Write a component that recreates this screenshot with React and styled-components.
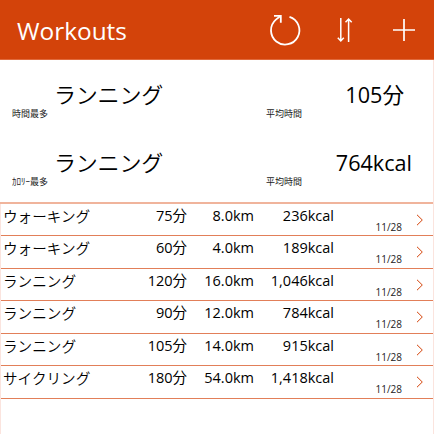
import React from "react";
import styled, { createGlobalStyle } from "styled-components";

const GlobalStyle = createGlobalStyle`
  * { box-sizing: border-box; }
  body {
    margin: 0;
    background: #fff;
    color: #000;
    font-family: "Open Sans", "Noto Sans CJK JP", sans-serif;
    overflow: hidden;
  }
`;

const Screen = styled.main`
  width: 434px;
  height: 434px;
  display: flex;
  flex-direction: column;
  border: 0 solid #fbe4de;
  border-right-width: 1px;
  background: #fff;
`;

const Header = styled.header`
  height: 60px;
  flex: none;
  width: 434px;
  display: flex;
  align-items: center;
  padding-left: 17px;
  background: #d3430a;
  border-bottom: 1px solid #e06a3c;
  color: #fff;
`;

const Title = styled.h1`
  flex: 1;
  margin: 0;
  padding-top: 2px;
  font-size: 24.4px;
  line-height: 34px;
  font-weight: 400;
`;

const IconButton = styled.button`
  width: 60px;
  height: 59px;
  padding: 0;
  border: 0;
  background: none;
  color: #fff;
  svg { display: block; }
`;

const Summary = styled.section`
  height: 144px;
  flex: none;
  display: grid;
  grid-template-rows: 68px 76px;
  border-bottom: 2px solid #f0b49c;
`;

const Stat = styled.div`
  display: grid;
  grid-template-columns: 54px 212px 1fr;
  grid-template-rows: 46px 16px;
  padding-top: 11px;
`;

const StatName = styled.div`
  grid-column: 2 / 3;
  font-size: 22px;
  line-height: 46px;
  letter-spacing: -0.2px;
  font-weight: 350;
`;

const StatValue = styled.div`
  grid-column: 3 / 4;
  padding-top: 1px;
  padding-right: ${(p) => p.$inset}px;
  text-align: right;
  font-size: 21.6px;
  line-height: 46px;
  font-weight: 370;
`;

const Caption = styled.div`
  grid-row: 2;
  grid-column: ${(p) => (p.$right ? "3 / 4" : "1 / 3")};
  padding-left: ${(p) => (p.$right ? 0 : 12)}px;
  margin-top: -11px;
  font-size: 9px;
  line-height: 16px;
  white-space: nowrap;
  color: #222;
`;

const List = styled.ul`
  margin: 0;
  padding: 0;
  list-style: none;
  border-left: 1px solid #fbe4de;
  flex: 1;
`;

const Row = styled.li`
  height: 32px;
  display: grid;
  grid-template-columns: 110px 76px 67px 80px 68px 31px;
  border-bottom: 1px solid #e27f59;
  &:nth-child(even) { height: 33px; }
`;

const Name = styled.span`
  padding-left: 2px;
  font-size: 14.6px;
  line-height: 24px;
  white-space: nowrap;
  font-weight: 350;
`;

const Amount = styled.span`
  text-align: right;
  font-size: 14.5px;
  line-height: 24px;
  white-space: nowrap;
`;

const DateText = styled.span`
  padding-top: 16px;
  text-align: right;
  font-size: 10px;
  line-height: 14px;
  color: #222;
`;

const Chevron = styled.svg`
  width: 8px;
  height: 12px;
  margin: 10px 0 0 14px;
`;

const stats = [
  { label: "時間最多", name: "ランニング", value: "105分", inset: 29 },
  { label: "ｶﾛﾘｰ最多", name: "ランニング", value: "764kcal", inset: 21 },
];

const workouts = [
  ["ウォーキング", "75分", "8.0km", "236kcal"],
  ["ウォーキング", "60分", "4.0km", "189kcal"],
  ["ランニング", "120分", "16.0km", "1,046kcal"],
  ["ランニング", "90分", "12.0km", "784kcal"],
  ["ランニング", "105分", "14.0km", "915kcal"],
  ["サイクリング", "180分", "54.0km", "1,418kcal"],
];

const stroke = { fill: "none", stroke: "currentColor" };

export default function App() {
  return (
    <>
      <GlobalStyle />
      <Screen>
        <Header>
          <Title>Workouts</Title>
          <IconButton aria-label="Refresh">
            <svg width="60" height="59" viewBox="0 0 60 59" {...stroke} strokeWidth="1.8">
              <path d="M35.5 16.8A14.2 14.2 0 1 1 21.9 19.6L26.4 16" />
              <path d="M20 15.8h6.8v7" />
            </svg>
          </IconButton>
          <IconButton aria-label="Sort">
            <svg width="60" height="59" viewBox="0 0 60 59" {...stroke} strokeWidth="1.5">
              <path d="M26.8 18v23M23.8 37.8l3 3.2 3-3.2" />
              <path d="M34.6 42V19M31.5 22.2l3.1-3.2 3.1 3.2" />
            </svg>
          </IconButton>
          <IconButton aria-label="Add">
            <svg width="60" height="59" viewBox="0 0 60 59" {...stroke} strokeWidth="1.7">
              <path d="M30 19v22M19 30h22" />
            </svg>
          </IconButton>
        </Header>
        <Summary>
          {stats.map((s) => (
            <Stat key={s.label}>
              <StatName>{s.name}</StatName>
              <StatValue $inset={s.inset}>{s.value}</StatValue>
              <Caption>{s.label}</Caption>
              <Caption $right>平均時間</Caption>
            </Stat>
          ))}
        </Summary>
        <List>
          {workouts.map(([name, ...amounts], i) => (
            <Row key={i}>
              <Name>{name}</Name>
              {amounts.map((a) => (
                <Amount key={a}>{a}</Amount>
              ))}
              <DateText>11/28</DateText>
              <Chevron viewBox="0 0 8 12" fill="none" stroke="#d3430a">
                <path d="M1 .8l5.3 5.2L1 11.2" />
              </Chevron>
            </Row>
          ))}
        </List>
      </Screen>
    </>
  );
}
